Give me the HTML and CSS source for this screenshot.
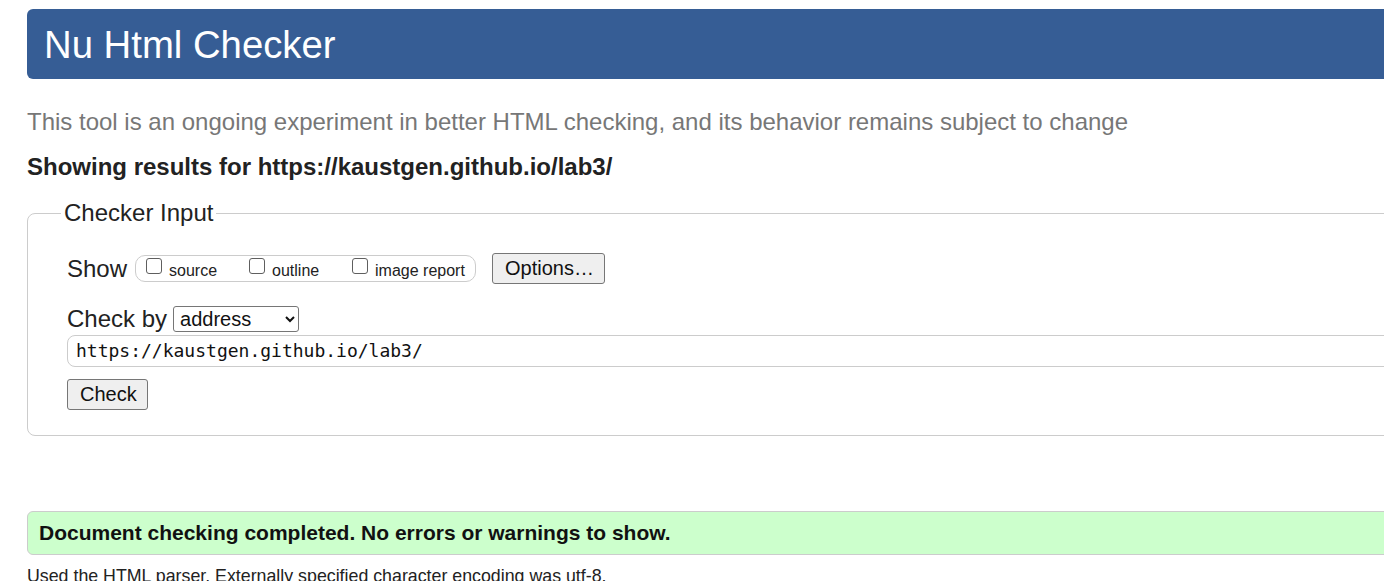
FILE: index.html
```html
<!DOCTYPE html>
<html lang="en">
<head>
<meta charset="utf-8">
<title>Nu Html Checker</title>
<link rel="stylesheet" href="styles.css">
</head>
<body>
<div class="page">
  <h1 class="banner">Nu Html Checker</h1>
  <p class="intro">This tool is an ongoing experiment in better HTML checking, and its behavior remains subject to change</p>
  <p class="showing">Showing results for https://kaustgen.github.io/lab3/</p>
  <form class="form">
    <fieldset class="checker">
      <legend class="legend">Checker Input</legend>
      <div class="row row-show">
        <span class="row-label">Show</span>
        <span class="group">
          <label class="opt opt-wide"><input type="checkbox" class="cb"><span>source</span></label>
          <label class="opt opt-wide"><input type="checkbox" class="cb"><span>outline</span></label>
          <label class="opt"><input type="checkbox" class="cb"><span>image report</span></label>
        </span>
        <button type="button" class="btn btn-options">Options…</button>
      </div>
      <div class="row row-by">
        <span class="row-label">Check by</span>
        <select class="select"><option>address</option></select>
      </div>
      <div class="url">https://kaustgen.github.io/lab3/</div>
      <div class="row row-check">
        <button type="button" class="btn btn-check">Check</button>
      </div>
    </fieldset>
  </form>
  <div class="success">Document checking completed. No errors or warnings to show.</div>
  <p class="details">Used the HTML parser. Externally specified character encoding was utf-8.</p>
</div>
</body>
</html>
```
FILE: styles.css
```css
html, body {
  margin: 0;
  padding: 0;
  overflow: hidden;
  background: #ffffff;
  height: 581px;
}
body {
  font-family: "Liberation Sans", Arial, sans-serif;
  color: #222222;
}
.page {
  width: 1600px;
  padding: 9px 0 0 27px;
  box-sizing: border-box;
}
.banner {
  margin: 0;
  height: 70px;
  background: #365d95;
  border-radius: 6px;
  color: #ffffff;
  font-weight: normal;
  font-size: 38.3px;
  line-height: 71px;
  padding-left: 17px;
}
.intro {
  margin: 29px 0 0;
  font-size: 24px;
  color: #777777;
  line-height: 28px;
}
.showing {
  margin: 17px 0 0;
  font-size: 24px;
  font-weight: bold;
  line-height: 28px;
  color: #222222;
}
.form {
  margin: 18px 0 0;
}
.checker {
  margin: 0;
  border: 1px solid #cccccc;
  border-radius: 8px;
  padding: 26px 40px 25px 39px;
  min-width: 0;
}
.legend {
  font-size: 24px;
  line-height: 28px;
  padding: 0 3px;
  margin-left: -6px;
  color: #222222;
}
.row {
  display: flex;
  align-items: center;
}
.row-label {
  font-size: 24px;
  line-height: 28px;
}
.row-show {
  height: 31px;
}
.group {
  margin-left: 8px;
  display: flex;
  align-items: center;
  height: 27px;
  border: 1px solid #cccccc;
  border-radius: 10px;
  padding: 0 8px 0 10px;
  box-sizing: border-box;
  width: 341px;
}
.opt {
  display: flex;
  align-items: center;
  font-size: 16px;
  color: #222222;
}
.opt-wide {
  width: 103px;
}
.cb {
  appearance: none;
  -webkit-appearance: none;
  margin: 0 7px 5px 0;
  width: 16px;
  height: 16px;
  border: 1px solid #5f5f5f;
  border-radius: 3px;
  background: #ffffff;
  box-sizing: border-box;
}
.opt span {
  line-height: 18px;
  margin-top: 4px;
}
.btn {
  font-family: "Liberation Sans", Arial, sans-serif;
  font-size: 20px;
  color: #111111;
  background: #efefef;
  border: 1px solid #767676;
  border-radius: 3px;
  height: 31px;
  padding: 0 12px;
  box-sizing: border-box;
}
.btn-options {
  margin-left: 16px;
  width: 113px;
}
.row-by {
  margin-top: 22px;
  height: 26px;
}
.select {
  margin-left: 6px;
  width: 126px;
  height: 26px;
  font-family: "Liberation Sans", Arial, sans-serif;
  font-size: 20px;
  color: #111111;
  background: #ffffff;
  border: 1px solid #767676;
  border-radius: 3px;
  padding: 0 0 0 2px;
}
.url {
  margin-top: 3px;
  height: 32px;
  box-sizing: border-box;
  border: 1px solid #cccccc;
  border-radius: 8px;
  padding-left: 8px;
  font-family: "DejaVu Sans Mono", "Liberation Mono", monospace;
  font-size: 18px;
  line-height: 30px;
  color: #111111;
  margin-right: -40px;
}
.row-check {
  margin-top: 12px;
}
.btn-check {
  width: 81px;
}
.success {
  margin-top: 75px;
  height: 44px;
  box-sizing: border-box;
  background: #ccffcc;
  border: 1px solid #cccccc;
  border-radius: 6px;
  padding-left: 11px;
  font-size: 21px;
  font-weight: bold;
  line-height: 42px;
  color: #111111;
}
.details {
  margin: 11px 0 0;
  font-size: 17.8px;
  line-height: 20px;
  color: #222222;
}
```
